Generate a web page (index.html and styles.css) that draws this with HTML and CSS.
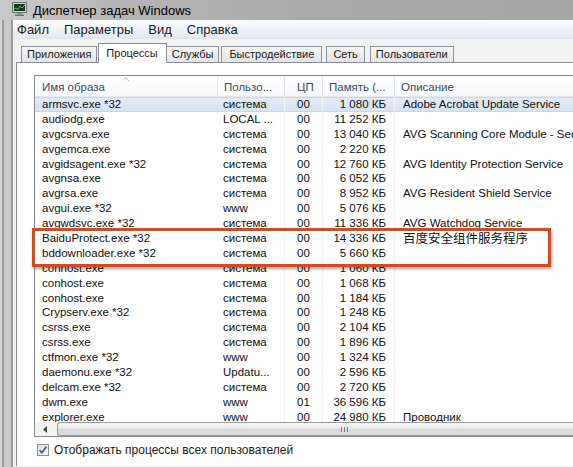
FILE: index.html
```html
<!DOCTYPE html>
<html lang="ru">
<head>
<meta charset="utf-8">
<title>Диспетчер задач Windows</title>
<link rel="stylesheet" href="styles.css">
</head>
<body>
<div class="titlebar">
  <svg class="app-icon" width="15" height="14" viewBox="0 0 15 14">
    <rect x="0.5" y="0.5" width="14" height="10" fill="#cfd3d6" stroke="#6d7276"/>
    <rect x="2" y="2" width="11" height="7" fill="#153515"/>
    <polyline points="2,7 4,6 6,7.5 8,4 10,6 13,3" fill="none" stroke="#49d04a" stroke-width="1"/>
    <rect x="5" y="11" width="5" height="1.5" fill="#8a8f93"/>
    <rect x="3" y="12.5" width="9" height="1.5" fill="#6d7276"/>
  </svg>
  <span class="title-text">Диспетчер задач Windows</span>
</div>
<div class="window">
  <nav class="menubar">
    <span class="menu-item">Файл</span>
    <span class="menu-item">Параметры</span>
    <span class="menu-item">Вид</span>
    <span class="menu-item">Справка</span>
  </nav>
  <div class="tabstrip">
    <span class="tab">Приложения</span>
    <span class="tab active">Процессы</span>
    <span class="tab">Службы</span>
    <span class="tab tab-perf">Быстродействие</span>
    <span class="tab tab-net">Сеть</span>
    <span class="tab tab-users">Пользователи</span>
  </div>
  <div class="panel">
    <div class="listview">
      <div class="lv-header">
        <div class="hcell col-name">Имя образа<span class="sort-arrow"></span></div>
        <div class="hcell">Пользо...</div>
        <div class="hcell">ЦП</div>
        <div class="hcell">Память (...</div>
        <div class="hcell">Описание</div>
      </div>
      <div class="lv-rows">
        <div class="row selected"><span class="c-name">armsvc.exe *32</span><span class="c-user">система</span><span class="c-cpu">00</span><span class="c-mem">1 080 КБ</span><span class="c-desc">Adobe Acrobat Update Service</span></div>
        <div class="row"><span class="c-name">audiodg.exe</span><span class="c-user">LOCAL ...</span><span class="c-cpu">00</span><span class="c-mem">11 252 КБ</span><span class="c-desc"></span></div>
        <div class="row"><span class="c-name">avgcsrva.exe</span><span class="c-user">система</span><span class="c-cpu">00</span><span class="c-mem">13 040 КБ</span><span class="c-desc">AVG Scanning Core Module - Server</span></div>
        <div class="row"><span class="c-name">avgemca.exe</span><span class="c-user">система</span><span class="c-cpu">00</span><span class="c-mem">2 220 КБ</span><span class="c-desc"></span></div>
        <div class="row"><span class="c-name">avgidsagent.exe *32</span><span class="c-user">система</span><span class="c-cpu">00</span><span class="c-mem">12 760 КБ</span><span class="c-desc">AVG Identity Protection Service</span></div>
        <div class="row"><span class="c-name">avgnsa.exe</span><span class="c-user">система</span><span class="c-cpu">00</span><span class="c-mem">6 052 КБ</span><span class="c-desc"></span></div>
        <div class="row"><span class="c-name">avgrsa.exe</span><span class="c-user">система</span><span class="c-cpu">00</span><span class="c-mem">8 952 КБ</span><span class="c-desc">AVG Resident Shield Service</span></div>
        <div class="row"><span class="c-name">avgui.exe *32</span><span class="c-user">www</span><span class="c-cpu">00</span><span class="c-mem">5 076 КБ</span><span class="c-desc"></span></div>
        <div class="row"><span class="c-name">avgwdsvc.exe *32</span><span class="c-user">система</span><span class="c-cpu">00</span><span class="c-mem">11 336 КБ</span><span class="c-desc">AVG Watchdog Service</span></div>
        <div class="row"><span class="c-name">BaiduProtect.exe *32</span><span class="c-user">система</span><span class="c-cpu">00</span><span class="c-mem">14 336 КБ</span><span class="c-desc cjk">百度安全组件服务程序</span></div>
        <div class="row"><span class="c-name">bddownloader.exe *32</span><span class="c-user">система</span><span class="c-cpu">00</span><span class="c-mem">5 660 КБ</span><span class="c-desc"></span></div>
        <div class="row"><span class="c-name">conhost.exe</span><span class="c-user">система</span><span class="c-cpu">00</span><span class="c-mem">1 060 КБ</span><span class="c-desc"></span></div>
        <div class="row"><span class="c-name">conhost.exe</span><span class="c-user">система</span><span class="c-cpu">00</span><span class="c-mem">1 068 КБ</span><span class="c-desc"></span></div>
        <div class="row"><span class="c-name">conhost.exe</span><span class="c-user">система</span><span class="c-cpu">00</span><span class="c-mem">1 184 КБ</span><span class="c-desc"></span></div>
        <div class="row"><span class="c-name">Crypserv.exe *32</span><span class="c-user">система</span><span class="c-cpu">00</span><span class="c-mem">1 248 КБ</span><span class="c-desc"></span></div>
        <div class="row"><span class="c-name">csrss.exe</span><span class="c-user">система</span><span class="c-cpu">00</span><span class="c-mem">2 104 КБ</span><span class="c-desc"></span></div>
        <div class="row"><span class="c-name">csrss.exe</span><span class="c-user">система</span><span class="c-cpu">00</span><span class="c-mem">1 896 КБ</span><span class="c-desc"></span></div>
        <div class="row"><span class="c-name">ctfmon.exe *32</span><span class="c-user">www</span><span class="c-cpu">00</span><span class="c-mem">1 324 КБ</span><span class="c-desc"></span></div>
        <div class="row"><span class="c-name">daemonu.exe *32</span><span class="c-user">Updatu...</span><span class="c-cpu">00</span><span class="c-mem">2 596 КБ</span><span class="c-desc"></span></div>
        <div class="row"><span class="c-name">delcam.exe *32</span><span class="c-user">система</span><span class="c-cpu">00</span><span class="c-mem">2 720 КБ</span><span class="c-desc"></span></div>
        <div class="row"><span class="c-name">dwm.exe</span><span class="c-user">www</span><span class="c-cpu">01</span><span class="c-mem">36 596 КБ</span><span class="c-desc"></span></div>
        <div class="row"><span class="c-name">explorer.exe</span><span class="c-user">www</span><span class="c-cpu">00</span><span class="c-mem">24 980 КБ</span><span class="c-desc">Проводник</span></div>
      </div>
      <div class="hscroll">
        <div class="sb-left"><svg width="4" height="7" viewBox="0 0 4 7"><polygon points="4,0 0,3.5 4,7" fill="#4a4a4a"/></svg></div>
        <div class="sb-thumb"><span class="grip"></span></div>
      </div>
    </div>
    <label class="showall">
      <svg class="checkbox" width="12" height="12" viewBox="0 0 12 12">
        <defs><linearGradient id="cbg" x1="0" y1="0" x2="1" y2="1"><stop offset="0" stop-color="#dcdcdc"/><stop offset="1" stop-color="#fbfbfb"/></linearGradient></defs>
        <rect x="0.5" y="0.5" width="11" height="11" fill="url(#cbg)" stroke="#8e8f8f"/>
        <polyline points="2.6,6.2 4.8,8.8 9.4,2.8" fill="none" stroke="#3d4f8f" stroke-width="1.6"/>
      </svg>
      <span>Отображать процессы всех пользователей</span>
    </label>
  </div>
</div>
<div class="annotation"></div>
</body>
</html>
```

FILE: styles.css
```css
* { box-sizing: border-box; }

body {
  margin: 0;
  width: 573px;
  height: 467px;
  overflow: hidden;
  position: relative;
  font-family: "Liberation Sans", Arial, sans-serif;
  color: #111;
  background: linear-gradient(to right, #d6d6d6 0, #d6d6d6 2px, #9d9d9d 2px, #9d9d9d 4px, #c9c9c9 4px, #c9c9c9 11px, #9a9a9a 11px, #9a9a9a 12px, #c9c9c9 12px);
}

.titlebar {
  height: 20px;
  display: flex;
  align-items: center;
  gap: 6px;
  padding-left: 12px;
  background: linear-gradient(to right, #c9c9c9 0, #b6b6b6 120px, #aaaaaa 300px, #a7a7a7 100%);
  font-size: 13px;
  color: #000;
}

.app-icon { display: block; margin-top: -2px; }

.window {
  margin-left: 12px;
  border-left: 1px solid #9a9a9a;
  height: 447px;
  background: #f1f1f1;
}

.menubar {
  height: 19px;
  display: flex;
  align-items: center;
  gap: 15px;
  padding: 1px 0 0 4px;
  background: linear-gradient(#fbfcfd, #e6e9f1);
  border-bottom: 1px solid #e1e4ea;
  font-size: 13px;
  color: #1a1a1a;
}

.tabstrip {
  height: 23px;
  display: flex;
  align-items: flex-end;
  padding-left: 8px;
  background: #f2f2f2;
  position: relative;
  z-index: 1;
}

.tab {
  height: 16px;
  padding: 0 5px;
  margin-right: 2px;
  font-size: 11px;
  line-height: 14px;
  color: #1a1a1a;
  border: 1px solid #8e9099;
  border-bottom: none;
  background: linear-gradient(#f6f6f6, #e4e4e4);
}

.tab.active {
  height: 20px;
  margin: 0 0 -1px -1px;
  padding: 1px 8px 0 7px;
  background: #fff;
  border-color: #8a8c95;
  line-height: 16px;
}

.tab.active + .tab { margin-left: -1px; }

.tab-perf { padding: 0 7px; }
.tab-net { margin-left: 2px; padding: 0 6px; }
.tab-users { margin-left: 3px; }

.panel {
  margin-left: 3px;
  height: 404px;
  background: #fff;
  border-left: 1px solid #898c95;
  border-top: 1px solid #898c95;
  padding: 12px 0 0 17px;
}

.listview {
  width: 580px;
  height: 362px;
  border: 1px solid #828790;
  border-right: none;
  display: flex;
  flex-direction: column;
  font-size: 11.5px;
}

.lv-header {
  height: 21px;
  flex: none;
  display: grid;
  grid-template-columns: 183px 67px 38px 72px 1fr;
  background: linear-gradient(#ffffff, #f7f8fa);
  border-bottom: 1px solid #e6e9ee;
  color: #3b4a5c;
}

.hcell {
  position: relative;
  padding: 5px 0 0 6px;
  border-right: 1px solid #e1e4ea;
  white-space: nowrap;
}

.hcell:first-child { padding-left: 7px; }
.hcell:nth-child(3) { padding-left: 12px; }

.sort-arrow {
  position: absolute;
  top: 2px;
  left: 88px;
  width: 7px;
  height: 4px;
  border-left: 1px solid #a9b8cb;
  border-top: 1px solid #a9b8cb;
  transform: rotate(45deg) scale(0.7);
}

.lv-rows {
  flex: 1;
  overflow: hidden;
}

.row {
  height: 14.9px;
  display: grid;
  grid-template-columns: 183px 67px 38px 72px 1fr;
  line-height: 14.9px;
  white-space: nowrap;
}

.row > span { overflow: hidden; }

.row.selected {
  background: linear-gradient(#e3ebf6, #d7e2f0);
  box-shadow: inset 0 1px 0 #c8d6e8, inset 0 -1px 0 #c8d6e8;
}

.c-name { padding-left: 7px; }
.c-user { padding-left: 5px; border-right: 1px solid #f1f1f1; }
.c-cpu { padding-left: 12px; border-right: 1px solid #f1f1f1; }
.c-mem { text-align: right; padding-right: 8px; border-right: 1px solid #f1f1f1; }
.c-desc { padding-left: 8px; overflow: visible !important; }

.cjk {
  font-family: "Noto Sans CJK SC", "Liberation Sans", sans-serif;
  font-size: 12.5px;
}

.hscroll {
  height: 14px;
  flex: none;
  display: flex;
  background: #ededed;
}

.sb-left {
  width: 22px;
  display: flex;
  align-items: center;
  padding-left: 8px;
  background: #f3f3f3;
}

.sb-left svg { display: block; }

.sb-thumb {
  flex: 1;
  display: flex;
  align-items: center;
  padding-left: 283px;
  border: 1px solid #999;
  border-right: none;
  border-radius: 3px 0 0 3px;
  background: linear-gradient(#f7f7f7, #e6e6e6 50%, #d9d9d9 51%, #dcdcdc);
}

.grip {
  width: 7px;
  height: 5px;
  background: repeating-linear-gradient(to right, #7a7a7a 0, #7a7a7a 1px, transparent 1px, transparent 3px);
}

.showall {
  display: flex;
  align-items: center;
  gap: 5px;
  margin: 6px 0 0 3px;
  font-size: 12px;
  color: #1a1a1a;
}

.checkbox { display: block; }

.annotation {
  position: absolute;
  left: 32px;
  top: 228px;
  width: 519px;
  height: 39px;
  border: 3px solid #cf4d22;
  box-shadow: 1px 2px 3px rgba(0, 0, 0, 0.35);
}
```
